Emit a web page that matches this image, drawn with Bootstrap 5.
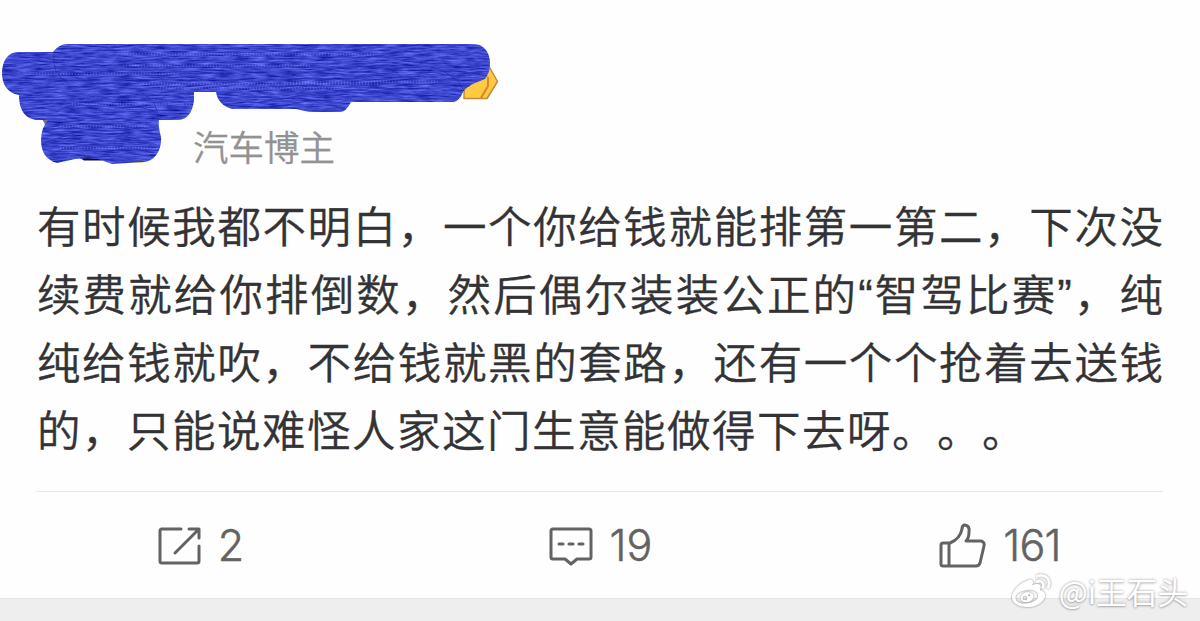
<!DOCTYPE html>
<html lang="zh-CN">
<head>
    <meta charset="UTF-8">
    <meta name="viewport" content="width=device-width, initial-scale=1.0">
    <title>汽车博主</title>
    <link href="https://cdn.jsdelivr.net/npm/bootstrap@5.3.1/dist/css/bootstrap.min.css" rel="stylesheet">
    <style>
        body {
            background-color: #fefefe;
            color: #333335;
            font-family: "Noto Sans CJK SC", sans-serif;
            height: 621px;
            overflow: hidden;
        }
        .post-header {
            height: 191px;
            padding: 120px 0 0 193px;
        }
        .post-role {
            color: #929292;
            font-size: 35.5px;
            font-weight: 350;
            line-height: 52px;
            -webkit-text-stroke: .3px #929292;
        }
        .scribble {
            left: 0;
            top: 0;
        }
        .post-text {
            margin: 0 37px 0 36px;
            height: 301px;
            border-bottom: 1px solid #e6e6e6;
            font-size: 43.5px;
            font-weight: 350;
            line-height: 68px;
            text-spacing-trim: space-all;
            -webkit-text-stroke: .35px #333335;
        }
        .post-line {
            height: 68px;
            padding-left: 1px;
            white-space: nowrap;
            text-align: justify;
            text-align-last: justify;
        }
        .post-line.last-line {
            text-align-last: left;
            letter-spacing: 1.5px;
        }
        .quote-mark {
            font-family: "Liberation Sans", sans-serif;
        }
        .post-actions {
            height: 106px;
            color: #636363;
            font-family: Inter, sans-serif;
            font-size: 43px;
            font-weight: 300;
            line-height: 107px;
            -webkit-text-stroke: .5px #636363;
        }
        .post-actions svg {
            fill: none;
            stroke: #636363;
            stroke-width: 3;
            stroke-linecap: round;
            stroke-linejoin: round;
        }
        .count-wide {
            letter-spacing: -.8px;
        }
        .page-gap {
            height: 23px;
            background-color: #eeeeee;
            border-top: 1px solid #e4e4e4;
        }
        .watermark {
            right: 12px;
            bottom: 7px;
            height: 46px;
            color: #fff;
            font-size: 30.6px;
            line-height: 46px;
            text-shadow: 0 0 3px rgba(0, 0, 0, .38), 0 1px 2px rgba(0, 0, 0, .15);
        }
        .watermark svg {
            margin-right: 6px;
            filter: drop-shadow(0 0 1px rgba(0, 0, 0, .45));
        }
    </style>
</head>
<body class="position-relative">
    <header class="post-header position-relative">
        <div class="post-role">汽车博主</div>
        <svg class="scribble position-absolute" width="520" height="180" viewBox="0 0 520 180">
            <defs>
                <!-- horizontal streaks of the brush -->
                <filter id="brush" x="0" y="0" width="100%" height="100%" color-interpolation-filters="sRGB">
                    <feTurbulence type="fractalNoise" baseFrequency="0.06 0.6" numOctaves="3" seed="4" result="noise"/>
                    <feColorMatrix in="noise" type="matrix" values="0.5 0 0 0 -0.01  0.5 0 0 0 0.03  0.5 0 0 0 0.56  0 0 0 0 1"/>
                    <feComposite in2="SourceGraphic" operator="in"/>
                </filter>
            </defs>
            <path d="M42 119h10l-5 9z" fill="#77757a"/>
            <path d="M80 158h22v2.500H84z" fill="#111"/>
            <path d="M128 161h19l-5 2h-10z" fill="#f8e84a"/>
            <path d="M464 98.500h23l10.500-17-9-16h-24z" fill="#fdcb3f" stroke="#c58838" stroke-width="1.500" stroke-linejoin="round"/>
            <path d="M481 98l7-12v-9" fill="none" stroke="#d9862a" stroke-width="2"/>
            <path filter="url(#brush)" fill="#3740c8" d="M18 52H53C57 47 61 44 68 44H474C484 44 490 53 490 63Q490 73 485 79L475 83Q466 87 463 92Q460 100 454 102H351Q346 112 340 112H309L296 109H232Q218 105 216 92H194V100Q192 119 178 120H159Q158 126 161 137C162 151 154 162 143 162L112 164L98 159Q84 158 75 159L57 163C46 160 41 152 41 140Q41 128 48 120H36C23 118 19 107 19 95C7 93 2 84 2 73C2 61 8 52 18 52Z"/>
            <g fill="none" stroke="#171e99" stroke-width="1" opacity=".5">
                <path d="M54 67H480M20 73H300M8 80H470M300 73Q390 60 480 74M25 100H150M280 90Q330 80 470 86"/>
                <path d="M56 112Q90 90 156 112M45 132Q90 115 157 134M45 143Q90 122 157 145M50 154Q88 136 154 153M287 98Q330 88 450 97M54 53Q51 74 68 83M430 67Q457 73 464 91M140 92Q158 100 158 119"/>
            </g>
            <g fill="none" stroke="#959bf0" stroke-width="1" stroke-dasharray="1 2" opacity=".6">
                <path d="M121 54H375M123 66H310M30 74H180M140 84H380M160 88H345M290 82H440M72 104H190M60 126H150M60 148H152"/>
            </g>
        </svg>
    </header>

    <main class="post-text">
        <div class="post-line">有时候我都不明白，一个你给钱就能排第一第二，下次没</div>
        <div class="post-line">续费就给你排倒数，然后偶尔装装公正的<span class="quote-mark">“</span>智驾比赛<span class="quote-mark">”</span>，纯</div>
        <div class="post-line">纯给钱就吹，不给钱就黑的套路，还有一个个抢着去送钱</div>
        <div class="post-line last-line">的，只能说难怪人家这门生意能做得下去呀。。。</div>
    </main>

    <div class="post-actions row g-0">
        <div class="col-4 d-flex justify-content-center align-items-center">
            <svg class="me-3" width="46" height="46" viewBox="0 0 46 46">
                <path d="M25 6H6Q4 6 4 8V38Q4 40 6 40H41Q43 40 43 38V23M33 6H43V15M42 7L19 30"/>
            </svg>
            <span>2</span>
        </div>
        <div class="col-4 d-flex justify-content-center align-items-center">
            <svg class="me-3" width="46" height="46" viewBox="0 0 46 46">
                <path d="M5 6H41Q43 6 43 8V34Q43 36 41 36H29L23 41L17 36H5Q3 36 3 34V8Q3 6 5 6ZM11 21H15M21 21H25M31 21H35"/>
            </svg>
            <span>19</span>
        </div>
        <div class="col-4 d-flex justify-content-center align-items-center">
            <svg class="me-3" width="48" height="46" viewBox="0 0 48 46">
                <path d="M4 20H11Q21 16 23 6Q23 2 26 2Q31 3 30 9Q30 15 27 18H42Q46 19 45 23L41 40Q40 43 37 43H4Q2 43 2 41V22Q2 20 4 20ZM10 20V43"/>
            </svg>
            <span class="count-wide">161</span>
        </div>
    </div>
    <div class="page-gap"></div>

    <div class="watermark position-absolute d-flex align-items-center">
        <svg width="43" height="38" viewBox="0 0 46 40">
            <path fill="#fff" fill-rule="evenodd" d="M18 9C23 6 26 8 24 14C30 11 35 13 32 19C38 21 39 25 36 29C32 35 24 38 16 37C7 36 2 32 2 26C3 19 11 11 18 9ZM18 19C10 20 5 24 6 28C7 33 13 34 19 33C26 32 31 28 30 24C29 20 24 18 18 19Z"/>
            <path fill="#fff" fill-rule="evenodd" d="M19 21C24 21 27 25 24 29C21 33 14 33 12 30C10 26 14 21 19 21ZM16 25A2.500 2.500 0 1 0 16 30A2.500 2.500 0 1 0 16 25ZM20.500 23.500A1 1 0 1 0 20.500 25.500A1 1 0 1 0 20.500 23.500Z"/>
            <path d="M29 4C38 1 44 8 41 16M29 10C34 8 37 12 35 16" fill="none" stroke="#fff" stroke-width="3" stroke-linecap="round"/>
        </svg>
        <span>@i王石头</span>
    </div>
    <script src="https://cdn.jsdelivr.net/npm/bootstrap@5.3.1/dist/js/bootstrap.bundle.min.js"></script>
</body>
</html>
